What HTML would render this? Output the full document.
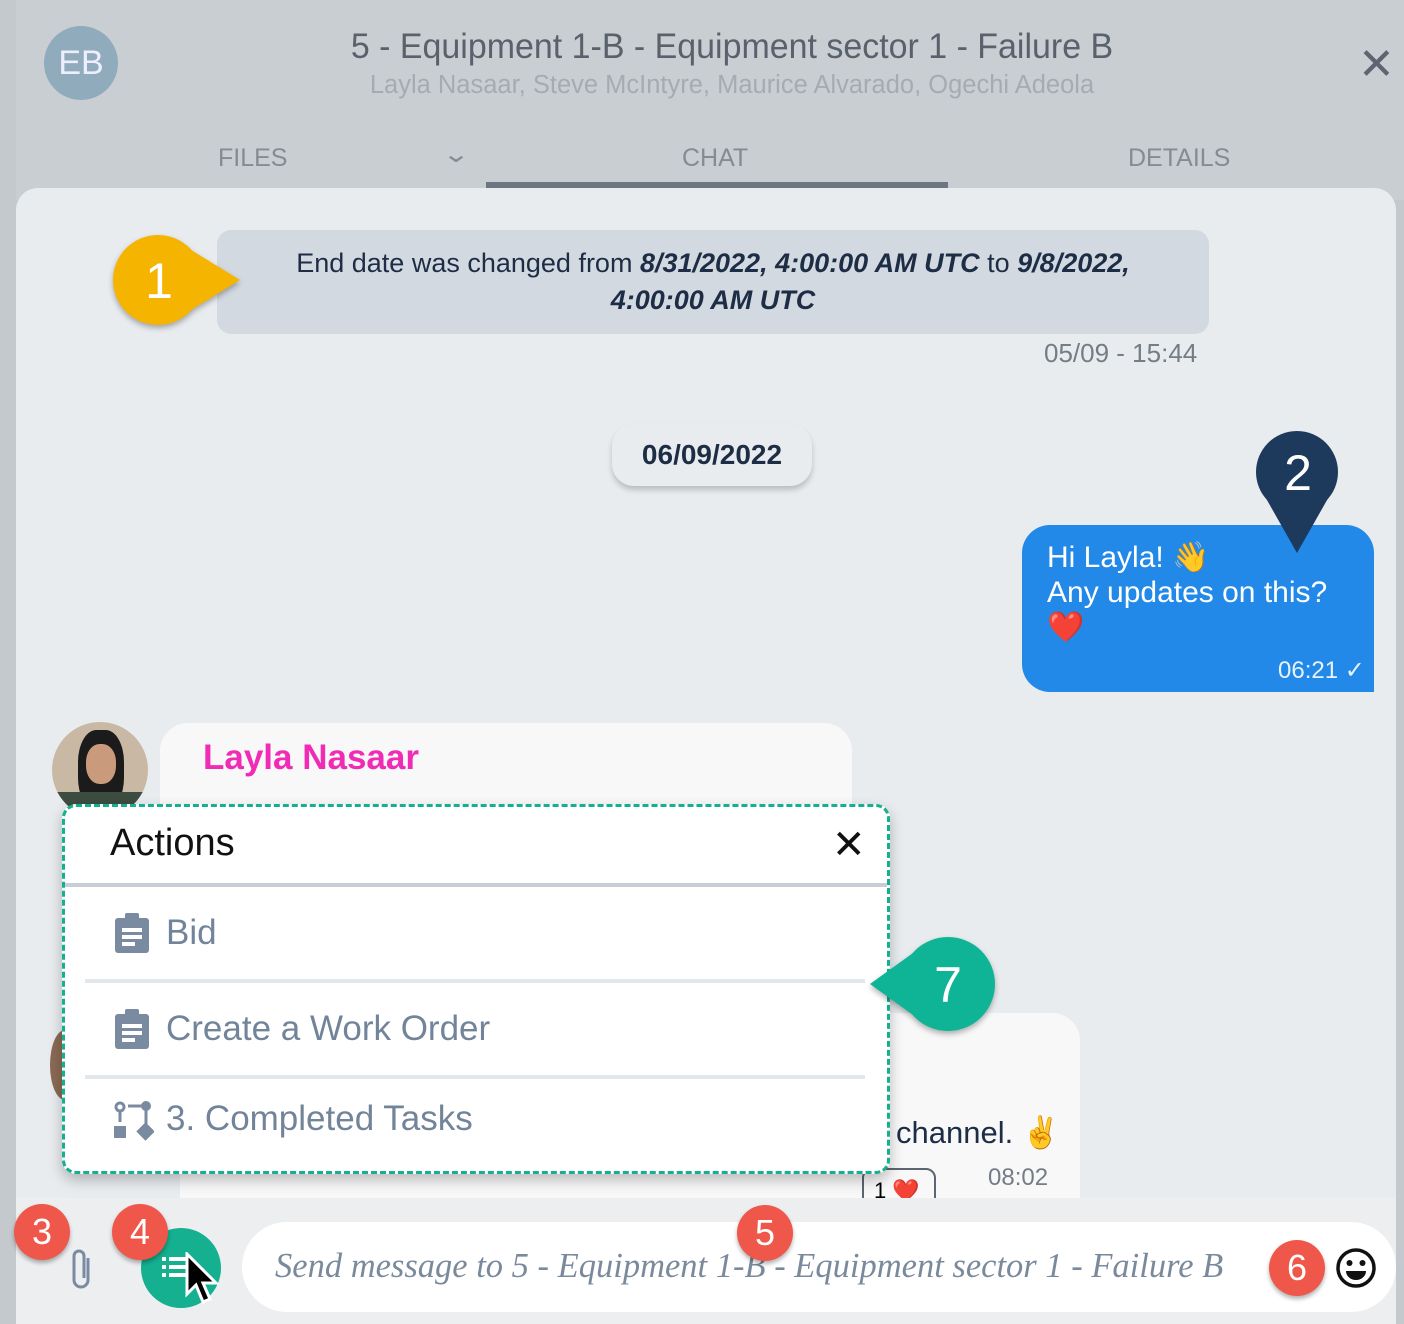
<!DOCTYPE html>
<html><head><meta charset="utf-8"><style>
*{box-sizing:border-box;margin:0;padding:0}
body{width:1404px;height:1324px;position:relative;overflow:hidden;background:#c4c9ce;font-family:"Liberation Sans",sans-serif}
.a{position:absolute}
.num{position:absolute;color:#fff;font-size:50px;text-align:center}
.red{position:absolute;width:56px;height:56px;border-radius:50%;background:#f0574b;color:#fff;font-size:36px;text-align:center;line-height:56px;box-shadow:0 3px 4px rgba(0,0,0,.3)}
</style></head><body>
<div class="a" style="left:16px;top:0;width:1388px;height:200px;background:#c9ced3"></div>
<div class="a" style="left:44px;top:26px;width:74px;height:74px;border-radius:50%;background:#8fabbc;color:#eef;font-size:34px;text-align:center;line-height:74px">EB</div>
<div class="a" style="left:0;width:1464px;top:27px;text-align:center;font-size:35px;color:#59616c;transform:scaleX(0.97)">5 - Equipment 1-B - Equipment sector 1 - Failure B</div>
<div class="a" style="left:0;width:1464px;top:71px;text-align:center;font-size:25.5px;color:#a6abb2">Layla Nasaar, Steve McIntyre, Maurice Alvarado, Ogechi Adeola</div>
<div class="a" style="left:1358px;top:40px;font-size:44px;color:#5d6570;line-height:50px">✕</div>
<div class="a" style="left:218px;top:144px;font-size:25px;color:#858b93">FILES</div>
<div class="a" style="left:446px;top:140px;font-size:24px;color:#858b93;transform:scaleX(1.4)">⌄</div>
<div class="a" style="left:682px;top:144px;font-size:25px;color:#858b93">CHAT</div>
<div class="a" style="left:1128px;top:144px;font-size:25px;color:#858b93">DETAILS</div>
<div class="a" style="left:486px;top:182px;width:462px;height:6px;background:#6c7580"></div>
<div class="a" style="left:16px;top:188px;width:1380px;height:1136px;background:#e9ecef;border-radius:22px 22px 0 0"></div>
<div class="a" style="left:217px;top:230px;width:992px;height:104px;background:#d3d9e0;border-radius:14px;color:#1c2d45;font-size:27px;text-align:center;line-height:37px;padding-top:15px">End date was changed from <b><i>8/31/2022, 4:00:00 AM UTC</i></b> to <b><i>9/8/2022,<br>4:00:00 AM UTC</i></b></div>
<div class="a" style="left:1044px;top:338px;font-size:26px;color:#747c86">05/09 - 15:44</div>
<div class="a" style="left:612px;top:424px;width:200px;height:62px;background:#e9ecef;border-radius:22px;box-shadow:0 4px 6px rgba(0,0,0,.2);text-align:center;line-height:62px;font-size:28px;font-weight:bold;color:#1c2d45">06/09/2022</div>
<svg class="a" style="left:100px;top:220px;filter:drop-shadow(0 3px 3px rgba(0,0,0,.3))" width="150" height="120"><circle cx="58" cy="60" r="45" fill="#f5b400"/><polygon points="70,17 70,103 140,60" fill="#f5b400"/></svg>
<div class="num" style="left:134px;top:252px;width:50px">1</div>
<div class="a" style="left:1022px;top:525px;width:352px;height:167px;background:#2289e8;border-radius:28px 28px 0 28px;color:#fff;font-size:30px;padding:15px 0 0 25px;line-height:35px">Hi Layla! 👋<br>Any updates on this?<br>❤️</div>
<div class="a" style="left:1278px;top:656px;color:#e8f2ff;font-size:24px">06:21 ✓</div>
<svg class="a" style="left:1247px;top:420px" width="100" height="140"><circle cx="50" cy="52" r="41" fill="#1d3a5c"/><polygon points="12,66 88,66 50,133" fill="#1d3a5c"/></svg>
<div class="num" style="left:1272px;top:444px;width:52px;font-size:50px">2</div>
<div class="a" style="left:160px;top:723px;width:692px;height:300px;background:#f8f8f9;border-radius:28px 28px 0 0"></div>
<div class="a" style="left:180px;top:1013px;width:900px;height:186px;background:#f8f8f9;border-radius:28px 28px 0 0"></div>
<div class="a" style="left:52px;top:722px;width:96px;height:96px;border-radius:50%;overflow:hidden;background:#c9b8a4">
<div class="a" style="left:26px;top:8px;width:46px;height:80px;border-radius:40%;background:#1b1b1b"></div>
<div class="a" style="left:34px;top:22px;width:30px;height:40px;border-radius:45%;background:#c99b7c"></div>
<div class="a" style="left:0;top:70px;width:96px;height:30px;background:#3d4c40"></div></div>
<div class="a" style="left:50px;top:1030px;width:30px;height:70px;border-radius:50%;background:#8a6a55"></div>
<div class="a" style="left:203px;top:738px;color:#f02bb5;font-size:35px;font-weight:bold">Layla Nasaar</div>
<div class="a" style="left:896px;top:1114px;color:#1c2d45;font-size:31px">channel. ✌️</div>
<div class="a" style="left:988px;top:1164px;color:#747c86;font-size:24px">08:02</div>
<div class="a" style="left:862px;top:1168px;width:74px;height:40px;border:2px solid #5d6570;border-radius:10px;font-size:22px;padding:8px 0 0 10px">1 ❤️</div>
<div class="a" style="left:62px;top:804px;width:828px;height:370px;background:#fff;border:3px dashed #14b08f;border-radius:14px;box-shadow:0 6px 14px rgba(0,0,0,.25)"></div>
<div class="a" style="left:110px;top:822px;font-size:38px;color:#111">Actions</div>
<div class="a" style="left:832px;top:822px;font-size:40px;color:#111">✕</div>
<div class="a" style="left:65px;top:883px;width:822px;height:4px;background:#c7ced6"></div>
<div class="a" style="left:85px;top:979px;width:780px;height:4px;background:#e2e7ec"></div>
<div class="a" style="left:85px;top:1075px;width:780px;height:4px;background:#e2e7ec"></div>
<svg class="a" style="left:114px;top:912px" width="38" height="42" viewBox="0 0 38 42"><rect x="1" y="6" width="34" height="35" rx="3" fill="#7a8ba1"/><rect x="11" y="1" width="14" height="9" rx="2" fill="#7a8ba1"/><rect x="8" y="16" width="20" height="4" fill="#fff"/><rect x="8" y="23" width="20" height="4" fill="#fff"/><rect x="8" y="30" width="13" height="4" fill="#fff"/></svg>
<div class="a" style="left:166px;top:913px;font-size:35px;color:#72849a">Bid</div>
<svg class="a" style="left:114px;top:1008px" width="38" height="42" viewBox="0 0 38 42"><rect x="1" y="6" width="34" height="35" rx="3" fill="#7a8ba1"/><rect x="11" y="1" width="14" height="9" rx="2" fill="#7a8ba1"/><rect x="8" y="16" width="20" height="4" fill="#fff"/><rect x="8" y="23" width="20" height="4" fill="#fff"/><rect x="8" y="30" width="13" height="4" fill="#fff"/></svg>
<div class="a" style="left:166px;top:1009px;font-size:35px;color:#72849a">Create a Work Order</div>
<svg class="a" style="left:114px;top:1100px" width="40" height="42" viewBox="0 0 40 42"><circle cx="6" cy="7" r="4" fill="none" stroke="#7a8ba1" stroke-width="3"/><line x1="6" y1="11" x2="6" y2="22" stroke="#7a8ba1" stroke-width="3"/><rect x="0" y="26" width="12" height="12" fill="#7a8ba1"/><line x1="14" y1="6" x2="28" y2="6" stroke="#7a8ba1" stroke-width="3"/><circle cx="32" cy="6" r="5" fill="#7a8ba1"/><line x1="32" y1="10" x2="32" y2="26" stroke="#7a8ba1" stroke-width="3"/><rect x="25" y="25" width="13" height="13" fill="#7a8ba1" transform="rotate(45 31.5 31.5)"/></svg>
<div class="a" style="left:166px;top:1099px;font-size:35px;color:#72849a">3. Completed Tasks</div>
<svg class="a" style="left:860px;top:930px;filter:drop-shadow(0 3px 3px rgba(0,0,0,.3))" width="140" height="110"><circle cx="88" cy="54" r="47" fill="#0fb496"/><polygon points="10,54 60,18 60,90" fill="#0fb496"/></svg>
<div class="num" style="left:922px;top:956px;width:52px">7</div>
<div class="a" style="left:16px;top:1198px;width:1380px;height:126px;background:#eceef0"></div>
<div class="a" style="left:242px;top:1222px;width:1154px;height:90px;background:#fff;border-radius:45px"></div>
<div class="a" style="left:275px;top:1247px;font-family:'Liberation Serif',serif;font-style:italic;font-size:34.5px;color:#7a8a9c;white-space:nowrap">Send message to 5 - Equipment 1-B - Equipment sector 1 - Failure B</div>
<svg class="a" style="left:68px;top:1246px" width="28" height="46" viewBox="0 0 28 46"><path d="M20 12 V34 a7 7 0 0 1 -14 0 V10 a5 5 0 0 1 10 0 V32" fill="none" stroke="#7a8ba1" stroke-width="3"/></svg>
<div class="a" style="left:141px;top:1228px;width:80px;height:80px;border-radius:50%;background:#14b08f"></div>
<svg class="a" style="left:162px;top:1255px" width="30" height="24"><g fill="#fff"><rect x="0" y="2" width="4" height="4"/><rect x="7" y="2" width="20" height="4"/><rect x="0" y="10" width="4" height="4"/><rect x="7" y="10" width="20" height="4"/><rect x="0" y="18" width="4" height="4"/><rect x="7" y="18" width="20" height="4"/></g></svg>
<svg class="a" style="left:184px;top:1252px" width="40" height="56"><path d="M3 2 L3 42 L12 33 L19 50 L26 47 L19 31 L32 31 Z" fill="#000" stroke="#fff" stroke-width="3"/></svg>
<div class="red" style="left:14px;top:1204px">3</div>
<div class="red" style="left:112px;top:1204px">4</div>
<div class="red" style="left:737px;top:1205px">5</div>
<div class="red" style="left:1269px;top:1240px">6</div>
<svg class="a" style="left:1334px;top:1246px" width="44" height="44" viewBox="0 0 44 44"><circle cx="22" cy="22" r="18" fill="none" stroke="#111" stroke-width="3.5"/><circle cx="15.5" cy="17" r="3" fill="#111"/><circle cx="28.5" cy="17" r="3" fill="#111"/><path d="M12 25 H32 A10 9 0 0 1 12 25Z" fill="#111"/></svg>
</body></html>
